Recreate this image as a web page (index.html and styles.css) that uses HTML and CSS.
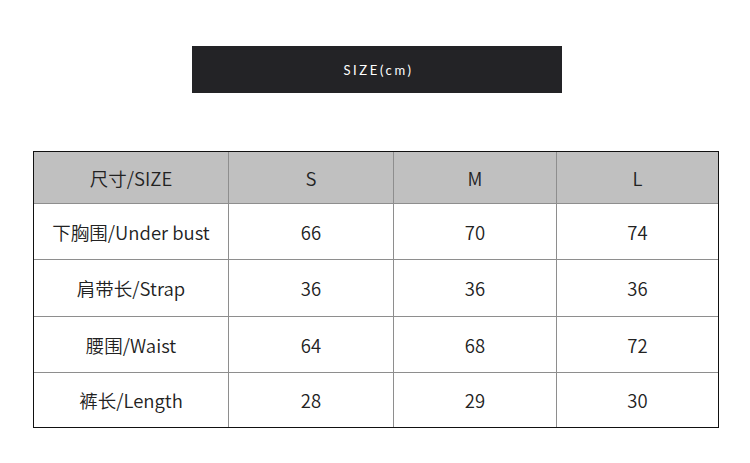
FILE: index.html
```html
<!DOCTYPE html>
<html lang="zh">
<head>
<meta charset="utf-8">
<link rel="stylesheet" href="styles.css">
</head>
<body>
<div class="page">
  <div class="banner">SIZE(cm)</div>
  <div class="sheet">
    <div class="cell head">尺寸/SIZE</div>
    <div class="cell head">S</div>
    <div class="cell head">M</div>
    <div class="cell head last">L</div>

    <div class="cell r1">下胸围/Under bust</div>
    <div class="cell r1">66</div>
    <div class="cell r1">70</div>
    <div class="cell r1 last">74</div>

    <div class="cell r2">肩带长/Strap</div>
    <div class="cell r2">36</div>
    <div class="cell r2">36</div>
    <div class="cell r2 last">36</div>

    <div class="cell r3">腰围/Waist</div>
    <div class="cell r3">64</div>
    <div class="cell r3">68</div>
    <div class="cell r3 last">72</div>

    <div class="cell r4 bottom">裤长/Length</div>
    <div class="cell r4 bottom">28</div>
    <div class="cell r4 bottom">29</div>
    <div class="cell r4 bottom last">30</div>
  </div>
</div>
</body>
</html>
```

FILE: styles.css
```css
html, body {
  margin: 0;
  padding: 0;
  background: #ffffff;
}

.page {
  width: 750px;
  height: 463px;
  padding-top: 46px;
  box-sizing: border-box;
}

.banner {
  margin-left: 192px;
  width: 370px;
  height: 47px;
  background: #232326;
  color: #ffffff;
  font-family: "Lato", "DejaVu Sans", sans-serif;
  font-size: 13px;
  font-weight: 400;
  letter-spacing: 2.6px;
  padding-left: 3px;
  box-sizing: border-box;
  display: flex;
  align-items: center;
  justify-content: center;
}

.sheet {
  margin-top: 58px;
  margin-left: 33px;
  width: 686px;
  box-sizing: border-box;
  border: 1px solid #111111;
  display: grid;
  grid-template-columns: 195px 165px 163px 161px;
  grid-template-rows: 52px 56px 57px 56px 54px;
  font-family: "Noto Sans CJK SC", "Noto Sans", sans-serif;
  font-size: 18.5px;
  font-weight: 350;
  color: #222222;
}

.cell {
  box-sizing: border-box;
  border-right: 1px solid #8e8e8e;
  border-bottom: 1px solid #8e8e8e;
  display: flex;
  align-items: center;
  justify-content: center;
  white-space: nowrap;
}

.cell.last {
  border-right: none;
}

.cell.bottom {
  border-bottom: none;
}

.head {
  background: #c0c0c0;
}
```
